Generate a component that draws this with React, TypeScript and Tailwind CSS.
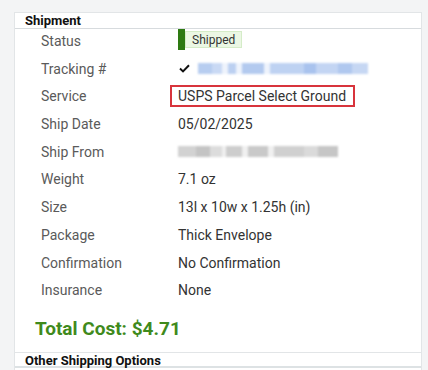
import React from "react";

const ROWS: { label: string; value: React.ReactNode; key: string }[] = [
  { key: "status", label: "Status", value: null },
  { key: "tracking", label: "Tracking #", value: null },
  { key: "service", label: "Service", value: null },
  { key: "date", label: "Ship Date", value: "05/02/2025" },
  { key: "from", label: "Ship From", value: null },
  { key: "weight", label: "Weight", value: "7.1 oz" },
  { key: "size", label: "Size", value: "13l x 10w x 1.25h (in)" },
  { key: "package", label: "Package", value: "Thick Envelope" },
  { key: "confirm", label: "Confirmation", value: "No Confirmation" },
  { key: "insurance", label: "Insurance", value: "None" },
];

const TRACKING_BLOCKS = [
  { w: 14, c: "#b7cdf0" }, { w: 10, c: "#c9d9f4" }, { w: 6, c: "#eef3fc" },
  { w: 8, c: "#bcd0f1" }, { w: 6, c: "#eef3fc" }, { w: 22, c: "#b3caef" },
  { w: 6, c: "#eef3fc" }, { w: 34, c: "#bed2f2" }, { w: 12, c: "#a9c3ee" },
  { w: 22, c: "#c3d5f3" }, { w: 14, c: "#b0c8ef" }, { w: 16, c: "#c6d7f3" },
];

const FROM_BLOCKS = [
  { w: 18, c: "#d2d2d2" }, { w: 14, c: "#c4c4c4" }, { w: 12, c: "#dcdcdc" },
  { w: 4, c: "#f0f0f0" }, { w: 16, c: "#cdcdcd" }, { w: 6, c: "#f0f0f0" },
  { w: 20, c: "#c9c9c9" }, { w: 6, c: "#f0f0f0" }, { w: 30, c: "#d0d0d0" },
  { w: 14, c: "#dadada" }, { w: 20, c: "#c6c6c6" },
];

function Blur({ blocks }: { blocks: { w: number; c: string }[] }) {
  return (
    <div className="flex h-[11px] blur-[1px]">
      {blocks.map((b, i) => (
        <div key={i} style={{ width: b.w, background: b.c }} className="h-full" />
      ))}
    </div>
  );
}

function Value({ k, v }: { k: string; v: React.ReactNode }) {
  if (k === "status") {
    return (
      <div className="flex h-[21px] -mt-[2px]">
        <div className="w-[7px] h-full bg-[#2e7a12]" />
        <div className="my-[2px] flex items-center px-[6px] bg-[#ebf7e4] border border-[#d5ecc8] text-[12px] text-[#333]">
          Shipped
        </div>
      </div>
    );
  }
  if (k === "tracking") {
    return (
      <div className="flex items-center h-[20px] gap-[8px]">
        <svg width="11" height="9" viewBox="0 0 11 9" className="ml-[1px]">
          <path d="M1 4.6 L4 7.4 L10 1.2" fill="none" stroke="#111" strokeWidth="2" />
        </svg>
        <Blur blocks={TRACKING_BLOCKS} />
      </div>
    );
  }
  if (k === "service") {
    return (
      <div className="-ml-[8px] -mt-[1px] h-[22px] w-[185px] flex items-center pl-[6px] border-2 border-[#d8343c] text-[#333]">
        USPS Parcel Select Ground
      </div>
    );
  }
  if (k === "from") {
    return (
      <div className="flex items-center h-[20px]">
        <Blur blocks={FROM_BLOCKS} />
      </div>
    );
  }
  return <div className="text-[#333]">{v}</div>;
}

export default function App() {
  return (
    <div
      className="w-[428px] h-[370px] bg-[#f3f4f5] pl-[14px] pt-[12px] overflow-hidden"
      style={{ fontFamily: "Roboto, 'Liberation Sans', sans-serif" }}
    >
      <div className="w-[408px] h-[400px] bg-white border-l border-t border-r border-[#e2e5e7]">
        {/* Header */}
        <div className="h-[16px] border-b border-[#d7dbde] pl-[10px] text-[13px] font-bold leading-[15px] text-[#111]">
          Shipment
        </div>

        {/* Rows */}
        <div className="flex flex-col">
          {ROWS.map(r => (
            <div key={r.key} className="flex h-[27.7px] pt-[2px] text-[14px] leading-[20px]">
              <div className="w-[163px] shrink-0 pl-[26px] text-[#5a5a5a]">{r.label}</div>
              <Value k={r.key} v={r.value} />
            </div>
          ))}
        </div>

        {/* Total */}
        <div className="h-[46px] flex items-center pl-[20px] text-[19px] font-bold text-[#3f8a1c]">
          Total Cost: $4.71
        </div>

        {/* Other options */}
        <div className="border-t border-[#e2e5e7] h-[16px] pl-[10px] text-[13px] font-bold leading-[15px] text-[#111] border-b-2 border-b-[#dde2e4]">
          Other Shipping Options
        </div>
      </div>
    </div>
  );
}
